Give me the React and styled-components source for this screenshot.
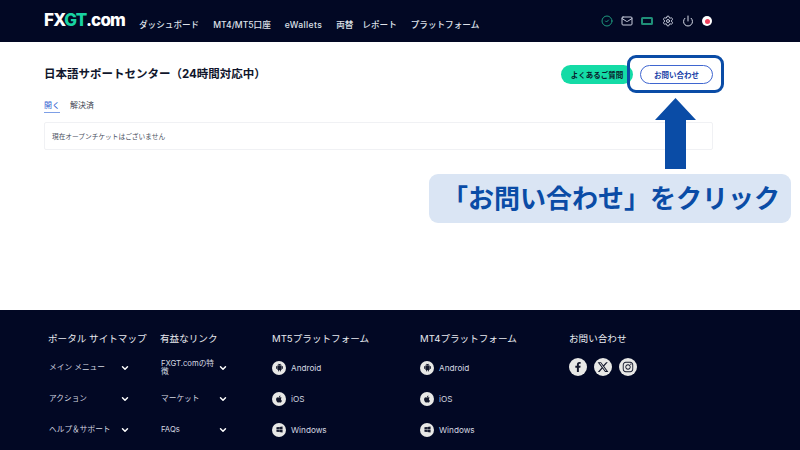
import React from 'react';
import styled, { createGlobalStyle } from 'styled-components';
import { CircleCheck, Mail, Settings, Power, ChevronDown } from 'lucide-react';
import { AiFillAndroid } from 'react-icons/ai';
import { FaApple, FaWindows, FaFacebookF, FaInstagram } from 'react-icons/fa';
import { FaXTwitter } from 'react-icons/fa6';

const FONT = `Inter, "Noto Sans CJK JP", sans-serif`;

const Global = createGlobalStyle`
  html, body { margin: 0; padding: 0; background: #fff; }
  body { font-family: ${FONT}; }
`;

const Page = styled.div`
  position: relative;
  width: 800px;
  height: 450px;
  overflow: hidden;
  display: flex;
  flex-direction: column;
`;

/* header */
const Header = styled.header`
  height: 42px;
  background: #020824;
  display: flex;
  align-items: center;
  padding-left: 44px;
  box-sizing: border-box;
`;
const Logo = styled.div`
  width: 81px;
  margin-right: 14px;
  margin-top: -3px;
  font-size: 17px;
  font-weight: 800;
  letter-spacing: -0.8px;
  color: #fff;
  white-space: nowrap;
  span { color: #19d3a2; }
`;
const Nav = styled.nav`
  display: flex;
  align-items: center;
  gap: 14px;
  width: 440px;
  margin-top: 7px;
`;
const NavItem = styled.a`
  font-size: 8.6px;
  line-height: 12px;
  font-weight: 500;
  color: #dfe2ea;
  white-space: nowrap;
  letter-spacing: ${p => p.$spacing || 0}px;
  margin-left: ${p => p.$shift || 0}px;
`;
const Tools = styled.div`
  display: flex;
  align-items: center;
  gap: 8.4px;
  margin-left: 21.5px;
  svg { display: block; }
`;
const Ticket = styled.div`
  width: 8px;
  height: 4px;
  border: 2px solid #1f8f78;
  border-radius: 1.5px;
`;
const Flag = styled.div`
  width: 10px;
  height: 10px;
  border-radius: 50%;
  background: #fff;
  display: flex;
  align-items: center;
  justify-content: center;
  &::after {
    content: '';
    width: 5px;
    height: 5px;
    border-radius: 50%;
    background: #ef3f5c;
  }
`;

/* main */
const Main = styled.main`
  height: 268px;
  box-sizing: border-box;
  padding: 13px 87px 0 44px;
  background: #fff;
`;
const TitleRow = styled.div`
  display: flex;
  align-items: center;
  height: 38px;
`;
const Title = styled.h1`
  flex: 1;
  margin: -2px 0 0;
  font-size: 11.5px;
  font-weight: 700;
  color: #10162c;
`;
const PillButton = styled.button`
  height: 19px;
  padding: 0;
  border-radius: 10px;
  font-family: ${FONT};
  font-size: 7.5px;
  font-weight: 700;
  display: flex;
  align-items: center;
  justify-content: center;
`;
const FaqButton = styled(PillButton)`
  width: 72px;
  margin-right: 7px;
  border: 0;
  background: #14dba6;
  color: #0a1a2c;
`;
const ContactButton = styled(PillButton)`
  width: 73px;
  border: 1px solid #3f66d0;
  background: #fff;
  color: #1a3fa8;
`;
const Tabs = styled.div`
  display: flex;
  gap: 10px;
  margin-top: 5px;
`;
const Tab = styled.div`
  font-size: 8px;
  line-height: 15px;
  height: 14px;
  color: ${p => (p.$active ? '#2f5fd0' : '#3a3f50')};
  border-bottom: ${p => (p.$active ? '1px solid #7d9fe6' : '1px solid transparent')};
`;
const EmptyBox = styled.div`
  height: 26px;
  margin-top: 9px;
  padding-left: 7px;
  border: 1px solid #f0f1f4;
  border-radius: 2px;
  display: flex;
  align-items: center;
  font-size: 6.7px;
  color: #4a4f60;
`;

/* footer */
const Footer = styled.footer`
  flex: 1;
  background: #020824;
  padding: 21px 0 0 48px;
  display: grid;
  grid-template-columns: 112px 112px 148px 149px 1fr;
  color: #e6e8ef;
`;
const Column = styled.div`
  display: flex;
  flex-direction: column;
`;
const ColumnTitle = styled.div`
  height: 15px;
  line-height: 15px;
  font-size: 9.6px;
  font-weight: 400;
  white-space: nowrap;
  margin-bottom: 6px;
  color: #e8eaf0;
`;
const MenuRow = styled.div`
  height: 31px;
  width: ${p => p.$width}px;
  padding-left: 1px;
  display: flex;
  align-items: center;
  justify-content: space-between;
  font-size: 7.7px;
  line-height: 8px;
  font-weight: 400;
  color: #d6d9e2;
  svg { flex: none; }
`;
const MenuLabel = styled.span`
  width: ${p => p.$width}px;
`;
const PlatformRow = styled.div`
  height: 31px;
  display: flex;
  align-items: center;
  gap: 5px;
  font-size: 8.2px;
  font-weight: 400;
  color: #d6d9e2;
`;
const RoundIcon = styled.span`
  width: ${p => p.$size}px;
  height: ${p => p.$size}px;
  border-radius: 50%;
  background: #e8e8e6;
  color: #14182c;
  display: flex;
  align-items: center;
  justify-content: center;
  flex: none;
`;
const SocialRow = styled.div`
  display: flex;
  gap: 7px;
  margin-top: 6px;
`;

/* callout drawn over the page */
const Highlight = styled.div`
  position: absolute;
  left: 627px;
  top: 55px;
  width: 97px;
  height: 38px;
  box-sizing: border-box;
  border: 3.5px solid #0a4ca6;
  border-radius: 9px;
`;
const Arrow = styled.svg`
  position: absolute;
  left: 655px;
  top: 98px;
`;
const Callout = styled.div`
  position: absolute;
  left: 429px;
  top: 174px;
  width: 362px;
  height: 49px;
  border-radius: 9px;
  background: #dae5f4;
  color: #0a4ca6;
  font-size: 26px;
  font-weight: 700;
  line-height: 49px;
  text-align: right;
  padding-right: 11px;
  box-sizing: border-box;
  white-space: nowrap;
`;

const navItems = [
  { label: 'ダッシュボード' },
  { label: 'MT4/MT5口座' },
  { label: 'eWallets', spacing: 0.35 },
  { label: '両替' },
  { label: 'レポート', shift: -5 },
  { label: 'プラットフォーム' },
];
const menus = [
  { title: 'ポータル サイトマップ', width: 81, items: ['メイン メニュー', 'アクション', 'ヘルプ＆サポート'] },
  { title: '有益なリンク', width: 67, labelWidth: 55, items: ['FXGT.comの特徴', 'マーケット', 'FAQs'] },
];
const platforms = ['MT5プラットフォーム', 'MT4プラットフォーム'];
const systems = [
  { name: 'Android', Icon: AiFillAndroid, size: 9 },
  { name: 'iOS', Icon: FaApple, size: 8 },
  { name: 'Windows', Icon: FaWindows, size: 7 },
];
const socials = [
  { Icon: FaFacebookF, size: 10 },
  { Icon: FaXTwitter, size: 12 },
  { Icon: FaInstagram, size: 12 },
];

const App = () => (
  <Page>
    <Global />
    <Header>
      <Logo>FX<span>GT</span>.com</Logo>
      <Nav>
        {navItems.map(item => (
          <NavItem key={item.label} $spacing={item.spacing} $shift={item.shift}>{item.label}</NavItem>
        ))}
      </Nav>
      <Tools>
        <CircleCheck size={12} color="#1f9a7f" />
        <Mail size={12} color="#c9cede" />
        <Ticket />
        <Settings size={12} color="#c9cede" />
        <Power size={12} color="#d8dce8" />
        <Flag />
      </Tools>
    </Header>

    <Main>
      <TitleRow>
        <Title>日本語サポートセンター（24時間対応中）</Title>
        <FaqButton>よくあるご質問</FaqButton>
        <ContactButton>お問い合わせ</ContactButton>
      </TitleRow>
      <Tabs>
        <Tab $active>開く</Tab>
        <Tab>解決済</Tab>
      </Tabs>
      <EmptyBox>現在オープンチケットはございません</EmptyBox>
    </Main>

    <Footer>
      {menus.map(menu => (
        <Column key={menu.title}>
          <ColumnTitle>{menu.title}</ColumnTitle>
          {menu.items.map(item => (
            <MenuRow key={item} $width={menu.width}>
              <MenuLabel $width={menu.labelWidth}>{item}</MenuLabel>
              <ChevronDown size={10} strokeWidth={3.5} color="#fff" />
            </MenuRow>
          ))}
        </Column>
      ))}
      {platforms.map(title => (
        <Column key={title}>
          <ColumnTitle>{title}</ColumnTitle>
          {systems.map(({ name, Icon, size }) => (
            <PlatformRow key={name}>
              <RoundIcon $size={14}><Icon size={size} /></RoundIcon>
              {name}
            </PlatformRow>
          ))}
        </Column>
      ))}
      <Column>
        <ColumnTitle>お問い合わせ</ColumnTitle>
        <SocialRow>
          {socials.map(({ Icon, size }, i) => (
            <RoundIcon key={i} $size={18}><Icon size={size} /></RoundIcon>
          ))}
        </SocialRow>
      </Column>
    </Footer>

    <Highlight />
    <Arrow width="41" height="71" viewBox="0 0 41 71">
      <path d="M20.5 0 L41 22 H31 V71 H10 V22 H0 Z" fill="#0a4ca6" />
    </Arrow>
    <Callout>「お問い合わせ」をクリック</Callout>
  </Page>
);

export default App;
